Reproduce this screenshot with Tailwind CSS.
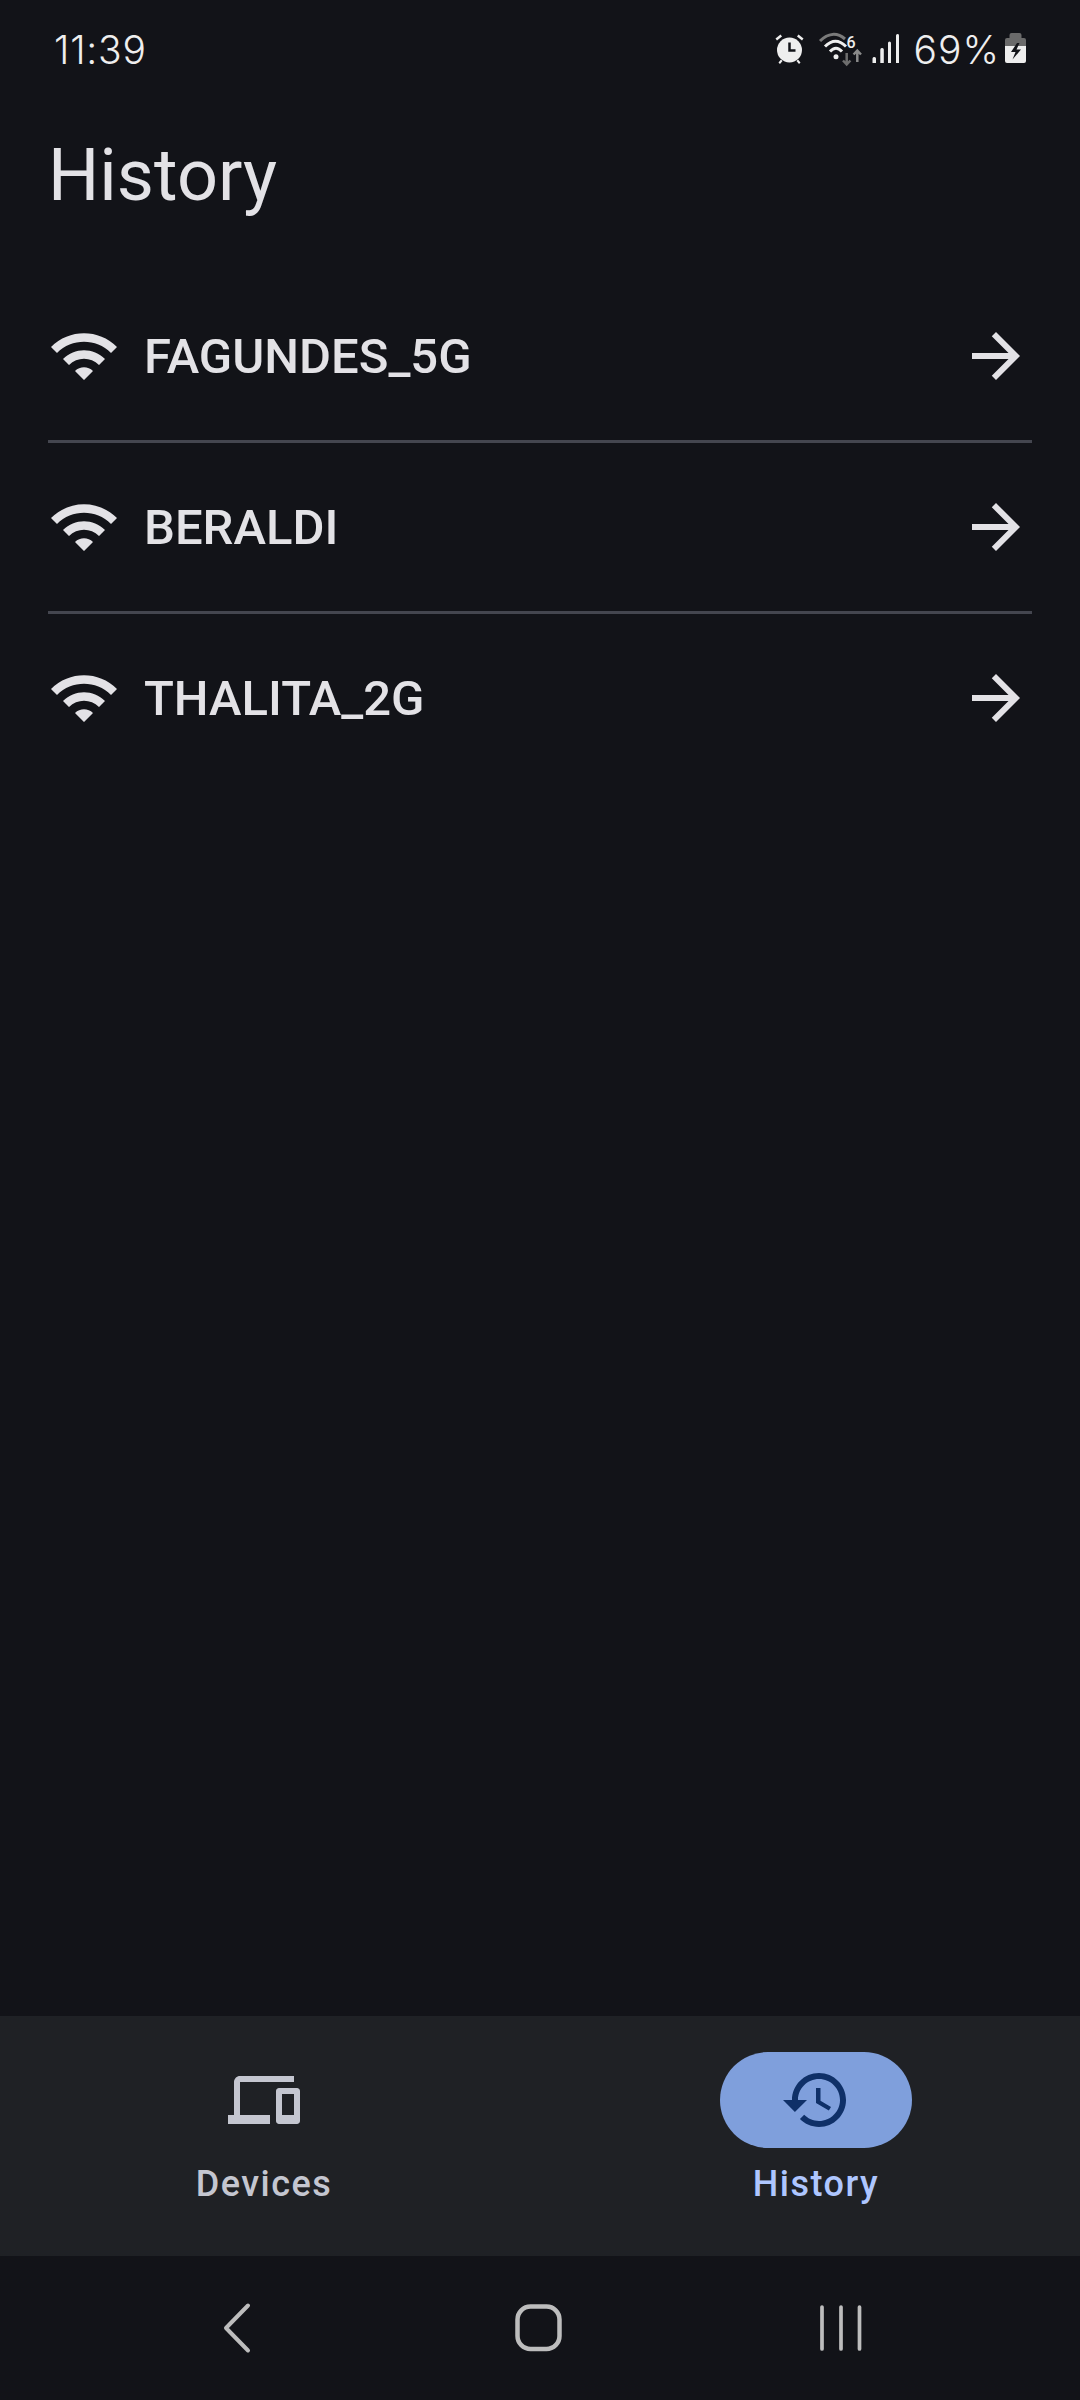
<!DOCTYPE html>
<html lang="en">

<head>
    <meta charset="UTF-8" />
    <title>History</title>
    <meta name="viewport" content="width=device-width, initial-scale=1" />
    <script src="https://cdn.jsdelivr.net/npm/@tailwindcss/browser@4"></script>
</head>

<body class="bg-[#121318] font-['Roboto',sans-serif]">
    <div class="h-[2400px] flex flex-col">

        <!-- status bar -->
        <div class="h-[100px] flex items-center pl-[54px] pr-[54px] text-[#eeeeee]">
            <span class="pb-[2px] font-['Inter',sans-serif] text-[39px] tracking-[0.8px] font-[350] leading-none">11:39</span>
            <div class="ml-auto flex items-center">
                <svg width="30" height="36" viewBox="775 32 30 36">
                    <circle cx="789.5" cy="50" r="12.5" fill="#eeeeee" />
                    <path d="M775.5 38.5l5-4 1.5 2-5 4zM803.5 38.5l-5-4-1.5 2 5 4zM778.5 62.5l2.5-3 1.5 1.5-2.5 3zM800.5 62.5l-2.5-3-1.5 1.5 2.5 3z" fill="#eeeeee" />
                    <path d="M789.5 42.5v8h6" fill="none" stroke="#121318" stroke-width="2.5" />
                </svg>
                <svg class="ml-[13px]" width="44" height="36" viewBox="818 32 44 36">
                    <path d="M820 41c8-8 17-9 25-2" fill="none" stroke="#7a7a7a" stroke-width="3" />
                    <path d="M825 46.5c7-7 14-7 21 0" fill="none" stroke="#eeeeee" stroke-width="3" />
                    <path d="M830 51.5c4-4.500 8-4.500 12 0" fill="none" stroke="#eeeeee" stroke-width="3" />
                    <circle cx="836" cy="56.700" r="2.500" fill="#eeeeee" />
                    <text x="851" y="47.500" text-anchor="middle" font-size="16" font-weight="500" fill="#eeeeee">6</text>
                    <path d="M846.700 53v11M843 60.500l3.700 4 3.700-4" fill="none" stroke="#6e6e6e" stroke-width="2.500" />
                    <path d="M857.300 62v-11M853.600 54.500l3.700-4 3.700 4" fill="none" stroke="#8a8a8a" stroke-width="2.500" />
                </svg>
                <svg class="ml-[10px]" width="27" height="36" viewBox="872 32 27 36">
                    <path d="M872.500 58.500a1.800 1.800 0 0 1 3.500 0V63h-3.500zM880.300 49.500a1.800 1.800 0 0 1 3.500 0V63h-3.500zM888 43a1.500 1.500 0 0 1 3 0V63h-3zM896 35.500a1.500 1.500 0 0 1 3 0V63h-3z" fill="#eeeeee" />
                </svg>
                <span class="ml-[15px] pb-[2px] font-['Inter',sans-serif] text-[39px] tracking-[1px] font-[350] leading-none">69%</span>
                <svg class="ml-[5px]" width="21" height="36" viewBox="1005 32 21 36">
                    <path d="M1009.500 38v-3a2 2 0 0 1 2-2h8a2 2 0 0 1 2 2v3h2.500a2 2 0 0 1 2 2v6h-21v-6a2 2 0 0 1 2-2z" fill="#6a6a6a" />
                    <path d="M1005 46h21v15a2 2 0 0 1-2 2h-17a2 2 0 0 1-2-2z" fill="#eeeeee" />
                    <path d="M1017 43l-6 9h4.500l-3 7.500 8.500-10h-4.500l3-6.500z" fill="#121318" />
                </svg>
            </div>
        </div>

        <!-- title -->
        <div class="h-[172px] pl-[48px] pt-[28px]">
            <h1 class="text-[72px] leading-[96px] font-normal text-[#e3e2e6]">History</h1>
        </div>

        <!-- networks -->
        <div class="flex-1 px-[48px] text-[#e3e2e6]">
            <div class="h-[168px] flex items-center">
                <svg class="w-[72px] h-[72px] shrink-0" viewBox="0 0 24 24" fill="#e3e2e6">
                    <path d="M1 9l2 2c4.970-4.970 13.030-4.970 18 0l2-2C16.930 2.930 7.080 2.930 1 9zm8 8l3 3 3-3c-1.650-1.660-4.340-1.660-6 0zm-4-4l2 2c2.760-2.760 7.240-2.760 10 0l2-2C15.140 9.140 8.870 9.140 5 13z" />
                </svg>
                <span class="ml-[24px] text-[49px] font-medium leading-none">FAGUNDES_5G</span>
                <svg class="ml-auto w-[72px] h-[72px]" viewBox="0 0 24 24" fill="#e3e2e6">
                    <path d="M12 4l-1.410 1.410L16.170 11H4v2h12.170l-5.580 5.590L12 20l8-8z" />
                </svg>
            </div>
            <div class="h-[3px] bg-[#44464f]"></div>
            <div class="h-[168px] flex items-center">
                <svg class="w-[72px] h-[72px] shrink-0" viewBox="0 0 24 24" fill="#e3e2e6">
                    <path d="M1 9l2 2c4.970-4.970 13.030-4.970 18 0l2-2C16.930 2.930 7.080 2.930 1 9zm8 8l3 3 3-3c-1.650-1.660-4.340-1.660-6 0zm-4-4l2 2c2.760-2.760 7.240-2.760 10 0l2-2C15.140 9.140 8.870 9.140 5 13z" />
                </svg>
                <span class="ml-[24px] text-[49px] font-medium leading-none">BERALDI</span>
                <svg class="ml-auto w-[72px] h-[72px]" viewBox="0 0 24 24" fill="#e3e2e6">
                    <path d="M12 4l-1.410 1.410L16.170 11H4v2h12.170l-5.580 5.590L12 20l8-8z" />
                </svg>
            </div>
            <div class="h-[3px] bg-[#44464f]"></div>
            <div class="h-[168px] flex items-center">
                <svg class="w-[72px] h-[72px] shrink-0" viewBox="0 0 24 24" fill="#e3e2e6">
                    <path d="M1 9l2 2c4.970-4.970 13.030-4.970 18 0l2-2C16.930 2.930 7.080 2.930 1 9zm8 8l3 3 3-3c-1.650-1.660-4.340-1.660-6 0zm-4-4l2 2c2.760-2.760 7.240-2.760 10 0l2-2C15.140 9.140 8.870 9.140 5 13z" />
                </svg>
                <span class="ml-[24px] text-[49px] font-medium leading-none">THALITA_2G</span>
                <svg class="ml-auto w-[72px] h-[72px]" viewBox="0 0 24 24" fill="#e3e2e6">
                    <path d="M12 4l-1.410 1.410L16.170 11H4v2h12.170l-5.580 5.590L12 20l8-8z" />
                </svg>
            </div>
        </div>

        <!-- bottom navigation -->
        <div class="h-[240px] bg-[#1f2125] flex">
            <div class="flex-1 flex flex-col items-center pt-[36px] pr-[12px]">
                <div class="w-[192px] h-[96px] rounded-full flex items-center justify-center">
                    <svg class="w-[72px] h-[72px]" viewBox="0 0 24 24" fill="#c4c6d0">
                        <path d="M4 6h18V4H4c-1.100 0-2 .9-2 2v11H0v3h14v-3H4V6zm19 2h-6c-.55 0-1 .45-1 1v10c0 .55.45 1 1 1h6c.55 0 1-.45 1-1V9c0-.55-.45-1-1-1zm-1 9h-4v-7h4v7z" />
                    </svg>
                </div>
                <span class="mt-[13px] text-[36px] leading-[46px] font-medium tracking-[1.500px] text-[#c4c6d0]">Devices</span>
            </div>
            <div class="flex-1 flex flex-col items-center pt-[36px] pl-[12px]">
                <div class="w-[192px] h-[96px] rounded-full bg-[#7f9fdc] flex items-center justify-center">
                    <svg class="w-[72px] h-[72px]" viewBox="0 0 24 24" fill="#0f3068">
                        <path d="M13 3c-4.970 0-9 4.030-9 9H1l3.890 3.890.07.14L9 12H6c0-3.870 3.130-7 7-7s7 3.130 7 7-3.130 7-7 7c-1.930 0-3.680-.79-4.940-2.060l-1.420 1.420C8.270 19.990 10.510 21 13 21c4.970 0 9-4.030 9-9s-4.030-9-9-9zm-1 5v5l4.280 2.540.72-1.210-3.500-2.080V8H12z" />
                    </svg>
                </div>
                <span class="mt-[13px] text-[36px] leading-[46px] font-medium tracking-[1.500px] text-[#aec6ff]">History</span>
            </div>
        </div>

        <!-- system navigation -->
        <div class="h-[144px]">
            <svg class="block" width="1080" height="144" viewBox="0 2256 1080 144" fill="none" stroke="#bdbdbd">
                <path d="M248 2305.500l-22 22.500 22 22.500" stroke-width="4" stroke-linecap="round" stroke-linejoin="round" />
                <rect x="517.500" y="2306.500" width="42" height="42.500" rx="13" stroke-width="4.500" />
                <path d="M822 2307v42M841 2307v42M859.500 2307v42" stroke-width="3.700" stroke-linecap="round" />
            </svg>
        </div>
    </div>
</body>

</html>
